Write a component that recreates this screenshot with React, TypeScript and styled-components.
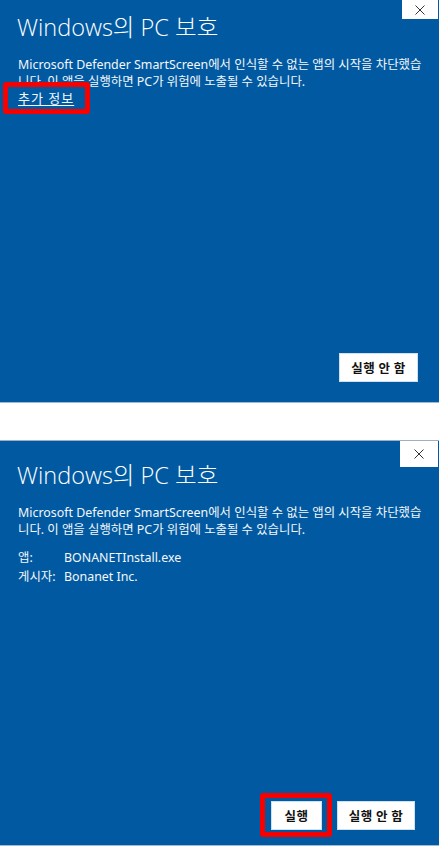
import React from "react";
import styled, { createGlobalStyle } from "styled-components";

const Global = createGlobalStyle`
  html, body { margin: 0; padding: 0; background: #ffffff; }
  body { font-family: "Noto Sans", "Noto Sans CJK KR", sans-serif; }
  #root { width: 441px; height: 848px; background: #ffffff; }
`;

const Page = styled.div`
  display: flex;
  flex-direction: column;
  width: 441px;
  height: 848px;
  background: #ffffff;
`;

const Panel = styled.section<{ $h: number; $top?: boolean }>`
  display: flex;
  flex-direction: column;
  box-sizing: border-box;
  width: 439px;
  height: ${(p) => p.$h}px;
  background: #015aa1;
  border-top: ${(p) => (p.$top ? "1px solid #9fb0c2" : "none")};
  border-bottom: 1px solid #9cbbd8;
  color: #ffffff;
  flex-shrink: 0;
`;

const Gap = styled.div<{ $h: number }>`
  height: ${(p) => p.$h}px;
  flex-shrink: 0;
`;

const Header = styled.div`
  display: flex;
  align-items: flex-start;
  justify-content: space-between;
`;

const Title = styled.h1<{ $mt: number }>`
  margin: ${(p) => p.$mt}px 0 0 17px;
  font-family: "Open Sans", "Noto Sans CJK KR", sans-serif;
  font-weight: 300;
  font-size: 23.5px;
  line-height: 30px;
  color: #ffffff;
  white-space: nowrap;
`;

const CloseButton = styled.button<{ $w: number; $h: number }>`
  display: flex;
  align-items: center;
  justify-content: center;
  width: ${(p) => p.$w}px;
  height: ${(p) => p.$h}px;
  margin: 0 1px 0 0;
  padding: 0;
  border: none;
  background: #ffffff;
  flex-shrink: 0;
`;

const Content = styled.div<{ $mt: number }>`
  display: flex;
  flex-direction: column;
  margin-top: ${(p) => p.$mt}px;
  padding: 0 17px 0 18px;
`;

const Message = styled.p`
  margin: 0;
  font-size: 12.4px;
  line-height: 17px;
  color: #f4f7fb;
  white-space: nowrap;
`;

const LinkRow = styled.div`
  display: flex;
  margin-top: 0;
`;

const Highlight = styled.span<{ $m: string; $p: string }>`
  display: inline-flex;
  margin: ${(p) => p.$m};
  padding: ${(p) => p.$p};
  border: 5px solid #f60000;
  border-radius: 3px;
`;

const MoreLink = styled.a`
  font-size: 13px;
  line-height: 17px;
  letter-spacing: 1px;
  color: #f4f7fb;
  text-decoration: underline;
  text-underline-offset: 2px;
  cursor: pointer;
`;

const InfoGrid = styled.dl`
  display: grid;
  grid-template-columns: 46px auto;
  margin: 10px 0 0 0;
  font-size: 12.4px;
  line-height: 19px;
  color: #f4f7fb;
`;

const Term = styled.dt`
  margin: 0;
`;

const Desc = styled.dd`
  margin: 0;
`;

const Spacer = styled.div`
  flex: 1;
`;

const Footer = styled.div<{ $pr: number; $pb: number }>`
  display: flex;
  justify-content: flex-end;
  align-items: center;
  gap: 15px;
  padding: 0 ${(p) => p.$pr}px ${(p) => p.$pb}px 0;
`;

const ActionButton = styled.button<{ $w: number }>`
  box-sizing: border-box;
  width: ${(p) => p.$w}px;
  height: 29px;
  padding: 0;
  background: #ffffff;
  border: 1px solid #cfe0f0;
  font-family: "Noto Sans CJK KR", sans-serif;
  font-weight: 700;
  font-size: 12.5px;
  color: #111111;
  letter-spacing: 0.5px;
`;

const CloseIcon = () => (
  <svg width="10" height="10" viewBox="0 0 10 10" aria-hidden="true">
    <path d="M0.5 0.5 L9.5 9.5 M9.5 0.5 L0.5 9.5" stroke="#333" strokeWidth="1" fill="none" />
  </svg>
);

export default function App() {
  return (
    <Page>
      <Global />
      <Panel $h={403}>
        <Header>
          <Title $mt={12}>Windows의 PC 보호</Title>
          <CloseButton $w={36} $h={19}>
            <CloseIcon />
          </CloseButton>
        </Header>
        <Content $mt={14}>
          <Message>
            Microsoft Defender SmartScreen에서 인식할 수 없는 앱의 시작을 차단했습
            <br />
            니다. 이 앱을 실행하면 PC가 위험에 노출될 수 있습니다.
          </Message>
          <LinkRow>
            <Highlight $m="-8px -16px -7px -15px" $p="3px 11px 2px 10px">
              <MoreLink>추가 정보</MoreLink>
            </Highlight>
          </LinkRow>
        </Content>
        <Spacer />
        <Footer $pr={21} $pb={20}>
          <ActionButton $w={79}>실행 안 함</ActionButton>
        </Footer>
      </Panel>
      <Gap $h={37} />
      <Panel $h={406} $top>
        <Header>
          <Title $mt={19}>Windows의 PC 보호</Title>
          <CloseButton $w={38} $h={26}>
            <CloseIcon />
          </CloseButton>
        </Header>
        <Content $mt={14}>
          <Message>
            Microsoft Defender SmartScreen에서 인식할 수 없는 앱의 시작을 차단했습
            <br />
            니다. 이 앱을 실행하면 PC가 위험에 노출될 수 있습니다.
          </Message>
          <InfoGrid>
            <Term>앱:</Term>
            <Desc>BONANETInstall.exe</Desc>
            <Term>게시자:</Term>
            <Desc>Bonanet Inc.</Desc>
          </InfoGrid>
        </Content>
        <Spacer />
        <Footer $pr={24} $pb={15}>
          <Highlight $m="-8px -10px -7px -11px" $p="3px 5px 2px 6px">
            <ActionButton $w={51}>실행</ActionButton>
          </Highlight>
          <ActionButton $w={78}>실행 안 함</ActionButton>
        </Footer>
      </Panel>
    </Page>
  );
}
